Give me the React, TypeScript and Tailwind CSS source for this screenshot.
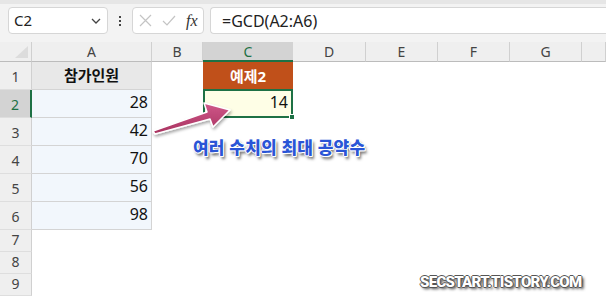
import React from "react";

const cols = ["A", "B", "C", "D", "E", "F", "G", ""];
const data = [28, 42, 70, 56, 98];

const font = "font-['Noto_Sans','Noto_Sans_CJK_KR',sans-serif]";

function FormulaBar() {
  return (
    <div className="h-[42px] bg-[#f3f3f3] border-t-4 border-[#e6e6e6] flex items-start pt-[3px] pl-2 gap-[6px]">
      {/* name box */}
      <div className="w-[100px] h-[27px] bg-white border border-[#d6d6d6] rounded-[4px] flex items-center px-[5px] justify-between">
        <span className="text-[15px] text-[#222]">C2</span>
        <svg width="10" height="6" viewBox="0 0 10 6" className="mr-[1px]">
          <path d="M1 1l4 4 4-4" fill="none" stroke="#444" strokeWidth="1.3" />
        </svg>
      </div>
      <div className="w-[12px] h-[27px] flex flex-col items-center justify-center gap-[2px]">
        <span className="w-[2px] h-[2px] bg-[#444]" />
        <span className="w-[2px] h-[2px] bg-[#444]" />
        <span className="w-[2px] h-[2px] bg-[#444]" />
      </div>
      <div className="w-[72px] h-[27px] bg-white border border-[#d6d6d6] rounded-[4px] flex items-center pl-[6px] gap-[10px]">
        <svg width="13" height="13" viewBox="0 0 13 13">
          <path d="M1 1l11 11M12 1L1 12" stroke="#c4c4c4" strokeWidth="1.2" />
        </svg>
        <svg width="14" height="11" viewBox="0 0 14 11">
          <path d="M1 6l4 4 8-9" fill="none" stroke="#c4c4c4" strokeWidth="1.2" />
        </svg>
        <span className="font-['Liberation_Serif',serif] italic text-[16px] text-[#333] leading-none">fx</span>
      </div>
      <div className="flex-1 h-[27px] bg-white border border-[#d6d6d6] border-r-0 rounded-l-[4px] flex items-center pl-[11px]">
        <span className="text-[16px] text-[#222]">=GCD(A2:A6)</span>
      </div>
    </div>
  );
}

export default function App() {
  return (
    <div className={`relative w-[606px] h-[302px] overflow-hidden bg-white ${font}`}>
      <FormulaBar />
      <div className="grid grid-cols-[32px_120px_51px_90px_73px_72px_72px_72px_1fr] grid-rows-[20px_repeat(6,28px)_repeat(3,22px)]">
        {/* header row */}
        <div className="bg-[#efefef] border-b border-[#bcbcbc] border-r border-r-[#d0d0d0] flex items-end justify-end p-[3px]">
          <svg width="13" height="12" viewBox="0 0 13 12">
            <path d="M13 0V12H0Z" fill="#dcdcdc" />
          </svg>
        </div>
        {cols.map((c) =>
          c === "C" ? (
            <div key={c} className="bg-[#d3d3d3] border-b-2 border-[#1e7145] flex items-center justify-center text-[14px] text-[#1e7145]">
              C
            </div>
          ) : (
            <div key={c || "H"} className="bg-[#efefef] border-b border-[#bcbcbc] border-r border-r-[#d0d0d0] flex items-center justify-center text-[14px] text-[#444]">
              {c}
            </div>
          )
        )}

        {/* row 1 */}
        <div className="bg-[#efefef] border-r border-[#d0d0d0] border-b border-b-[#dedede] flex items-end justify-center pb-[2px] text-[14px] text-[#444]">1</div>
        <div className="bg-[#e8e8e8] border-r border-b border-[#d4d4d4] flex items-center justify-center text-[15px] font-bold text-[#111]">
          참가인원
        </div>
        <div />
        <div className="bg-[#c0501a] flex items-center justify-center text-[15px] font-bold text-white">예제2</div>
        <div />
        <div />
        <div />
        <div />
        <div />

        {data.map((v, i) => (
          <React.Fragment key={v}>
            <div
              className={
                i === 0
                  ? "bg-[#d3d3d3] border-r-2 border-[#1e7145] border-b border-b-[#dedede] flex items-end justify-center pb-[2px] text-[14px] text-[#1e7145]"
                  : "bg-[#efefef] border-r border-[#d0d0d0] border-b border-b-[#dedede] flex items-end justify-center pb-[2px] text-[14px] text-[#444]"
              }
            >
              {i + 2}
            </div>
            <div className="bg-[#f2f7fc] border-r border-b border-[#d4d4d4] flex items-end justify-end pr-[3px] pb-[3px] text-[16px] text-[#111]">
              {v}
            </div>
            <div />
            {i === 0 ? (
              <div className="relative bg-[#fefee6] border-2 border-[#1e7145] -mt-[1px] flex items-end justify-end pr-[3px] pb-[2px] text-[16px] text-[#111]">
                14
                <span className="absolute -right-[4px] -bottom-[4px] w-[6px] h-[6px] bg-[#1e7145] border border-white" />
              </div>
            ) : (
              <div />
            )}
            <div />
            <div />
            <div />
            <div />
            <div />
          </React.Fragment>
        ))}

        {[7, 8, 9].map((n) => (
          <React.Fragment key={n}>
            <div className="bg-[#efefef] border-r border-[#d0d0d0] border-b border-b-[#dedede] flex items-end justify-center pb-[1px] text-[14px] text-[#444]">
              {n}
            </div>
            <div className="col-span-8" />
          </React.Fragment>
        ))}
      </div>

      {/* arrow annotation */}
      <svg className="absolute left-0 top-0" width="606" height="302" viewBox="0 0 606 302">
        <defs>
          <filter id="sh" x="-20%" y="-50%" width="140%" height="200%">
            <feDropShadow dx="1" dy="2" stdDeviation="1.5" floodColor="#000" floodOpacity="0.35" />
          </filter>
          <linearGradient id="ag" x1="0" y1="0" x2="0" y2="1">
            <stop offset="0" stopColor="#d0588a" />
            <stop offset="1" stopColor="#a8325f" />
          </linearGradient>
        </defs>
        <path
          d="M153 131 L207 112 L204 103 L230 110 L213 127 L210 119 L155 134 Z"
          fill="url(#ag)"
          stroke="#fff"
          strokeWidth="1.5"
          strokeLinejoin="round"
          filter="url(#sh)"
        />
      </svg>

      <div className="absolute left-[193px] top-[139px] text-[17px] font-black leading-none text-[#2a55d6] tracking-[0.2px] [text-shadow:0_0_1px_#fff,1px_0_0_#fff,-1px_0_0_#fff,0_1px_0_#fff,0_-1px_0_#fff,1px_1px_0_#fff,2px_3px_3px_#555]">
        여러 수치의 최대 공약수
      </div>

      <div className="absolute left-[420px] top-[275px] text-[15px] font-black leading-none tracking-[-0.7px] text-white font-['Roboto',sans-serif] [text-shadow:1px_0_0_#555,-1px_0_0_#555,0_1px_0_#555,0_-1px_0_#555,2px_2px_3px_#333]">
        SECSTART.TISTORY.COM
      </div>
    </div>
  );
}
